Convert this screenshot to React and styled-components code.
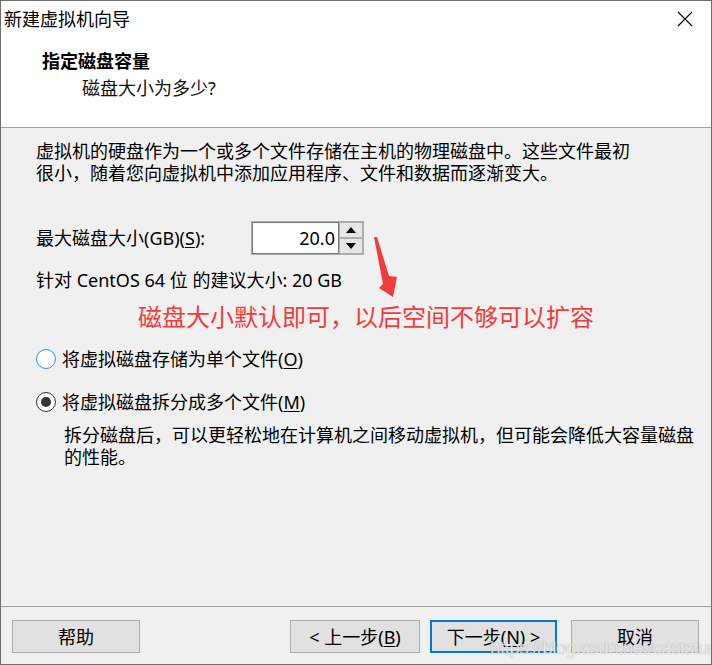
import React from "react";
import styled, { createGlobalStyle } from "styled-components";

const Global = createGlobalStyle`
  html, body { margin: 0; padding: 0; background: #f0f0f0; }
  * { box-sizing: border-box; }
  body { font-family: "Noto Sans", "Noto Sans CJK SC", sans-serif; }
`;

const Window = styled.div`
  position: relative;
  width: 712px;
  height: 665px;
  border: 1px solid #6e6e6e;
  background: #f0f0f0;
  display: flex;
  flex-direction: column;
  color: #000;
  font-size: 18px;
  overflow: hidden;
`;

const Top = styled.div`
  background: #fff;
  height: 127px;
  border-bottom: 1px solid #a0a0a0;
  display: flex;
  flex-direction: column;
`;

const TitleBar = styled.div`
  height: 36px;
  display: flex;
  align-items: center;
  justify-content: space-between;
  padding: 0 18px 0 3px;
`;

const Title = styled.div`
  font-size: 18px;
  line-height: 22px;
`;

const Close = styled.div`
  width: 16px;
  height: 16px;
  display: flex;
`;

const Heading = styled.div`
  padding: 0 0 0 41px;
  margin-top: 12px;
  font-weight: 700;
  font-family: "Noto Sans CJK SC", sans-serif;
  font-size: 18px;
  line-height: 22px;
`;

const Sub = styled.div`
  padding-left: 81px;
  margin-top: 6px;
  line-height: 22px;
  color: #111;
`;

const Body = styled.div`
  flex: 1;
  padding: 12px 0 0 35px;
  display: flex;
  flex-direction: column;
`;

const Para = styled.div`
  line-height: 22px;
  white-space: nowrap;
  margin-top: ${(p) => p.$mt || 0}px;
  padding-left: ${(p) => p.$pl || 0}px;
`;

const Row = styled.div`
  display: flex;
  align-items: center;
  margin-top: ${(p) => p.$mt || 0}px;
`;

const Label = styled.div`
  width: 215px;
  line-height: 22px;
`;

const U = styled.span`
  text-decoration: underline;
  text-underline-offset: 2px;
`;

const Spinner = styled.div`
  display: flex;
  height: 34px;
  border: 1px solid #acacac;
`;

const SpinInput = styled.div`
  width: 87px;
  background: #fff;
  border: 1px solid #7a7a7a;
  display: flex;
  align-items: center;
  justify-content: flex-end;
  padding-right: 3px;
  font-size: 18px;
`;

const SpinBtns = styled.div`
  width: 24px;
  display: flex;
  flex-direction: column;
`;

const SpinBtn = styled.div`
  flex: 1;
  background: #e6e6e6;
  border: 1px solid #adadad;
  display: flex;
  align-items: center;
  justify-content: center;
`;

const Red = styled.div`
  margin-top: 10px;
  padding-left: 102px;
  color: #f23b3b;
  font-family: "Noto Sans CJK SC", sans-serif;
  font-size: 24px;
  line-height: 30px;
  white-space: nowrap;
`;

const Radio = styled.div`
  width: 20px;
  height: 20px;
  border-radius: 50%;
  background: #fff;
  border: 1px solid ${(p) => (p.$checked ? "#333" : "#3a8ee6")};
  display: flex;
  align-items: center;
  justify-content: center;
  margin-right: 6px;
  &::after {
    content: "";
    display: ${(p) => (p.$checked ? "block" : "none")};
    width: 10px;
    height: 10px;
    border-radius: 50%;
    background: #333;
  }
`;

const RadioText = styled.div`
  line-height: 24px;
`;

const Footer = styled.div`
  height: 58px;
  border-top: 1px solid #a0a0a0;
  display: flex;
  align-items: flex-start;
  padding: 13px 0 0 11px;
`;

const Button = styled.div`
  width: ${(p) => p.$w || 128}px;
  height: 33px;
  margin-left: ${(p) => p.$ml || 0}px;
  background: #e1e1e1;
  border: ${(p) => (p.$primary ? "2px solid #0078d7" : "1px solid #adadad")};
  display: flex;
  align-items: center;
  justify-content: center;
  font-size: 18px;
  line-height: 22px;
`;

const Arrow = styled.svg`
  position: absolute;
  left: 370px;
  top: 232px;
`;

const Watermark = styled.div`
  position: absolute;
  left: 489px;
  top: 636px;
  font-family: "Liberation Sans", Arial, sans-serif;
  font-size: 19px;
  letter-spacing: -0.6px;
  color: rgba(255, 255, 255, 0.75);
  text-shadow: 0 0 1px rgba(90, 90, 90, 0.55);
  white-space: nowrap;
  pointer-events: none;
`;

export default function App() {
  return (
    <>
      <Global />
      <Window>
        <Top>
          <TitleBar>
            <Title>新建虚拟机向导</Title>
            <Close>
              <svg width="16" height="16" viewBox="0 0 16 16">
                <path d="M1 1 L15 15 M15 1 L1 15" stroke="#000" strokeWidth="1.1" fill="none" />
              </svg>
            </Close>
          </TitleBar>
          <Heading>指定磁盘容量</Heading>
          <Sub>磁盘大小为多少?</Sub>
        </Top>
        <Body>
          <Para>
            虚拟机的硬盘作为一个或多个文件存储在主机的物理磁盘中。这些文件最初
            <br />
            很小，随着您向虚拟机中添加应用程序、文件和数据而逐渐变大。
          </Para>
          <Row $mt={37}>
            <Label>
              最大磁盘大小(GB)(<U>S</U>):
            </Label>
            <Spinner>
              <SpinInput>20.0</SpinInput>
              <SpinBtns>
                <SpinBtn>
                  <svg width="10" height="6" viewBox="0 0 10 6">
                    <path d="M0 6 L5 0 L10 6 Z" fill="#000" />
                  </svg>
                </SpinBtn>
                <SpinBtn>
                  <svg width="10" height="6" viewBox="0 0 10 6">
                    <path d="M0 0 L10 0 L5 6 Z" fill="#000" />
                  </svg>
                </SpinBtn>
              </SpinBtns>
            </Spinner>
          </Row>
          <Para $mt={14}>针对 CentOS 64 位 的建议大小: 20 GB</Para>
          <Red>磁盘大小默认即可，以后空间不够可以扩容</Red>
          <Row $mt={16}>
            <Radio />
            <RadioText>
              将虚拟磁盘存储为单个文件(<U>O</U>)
            </RadioText>
          </Row>
          <Row $mt={19}>
            <Radio $checked />
            <RadioText>
              将虚拟磁盘拆分成多个文件(<U>M</U>)
            </RadioText>
          </Row>
          <Para $mt={10} $pl={28}>
            拆分磁盘后，可以更轻松地在计算机之间移动虚拟机，但可能会降低大容量磁盘
            <br />
            的性能。
          </Para>
        </Body>
        <Footer>
          <Button>帮助</Button>
          <Button $ml={150} $w={130}>
            &lt; 上一步(<U>B</U>)
          </Button>
          <Button $ml={10} $w={127} $primary>
            下一步(<U>N</U>) &gt;
          </Button>
          <Button $ml={14} $w={128}>取消</Button>
        </Footer>
        <Arrow width="30" height="68" viewBox="0 0 30 68">
          <polygon points="3,4 6,4 18,43 26,44 22,64 8,55 12,51" fill="#f23b3b" />
        </Arrow>
        <Watermark>https://blog.csdn.net/caststudy</Watermark>
      </Window>
    </>
  );
}
